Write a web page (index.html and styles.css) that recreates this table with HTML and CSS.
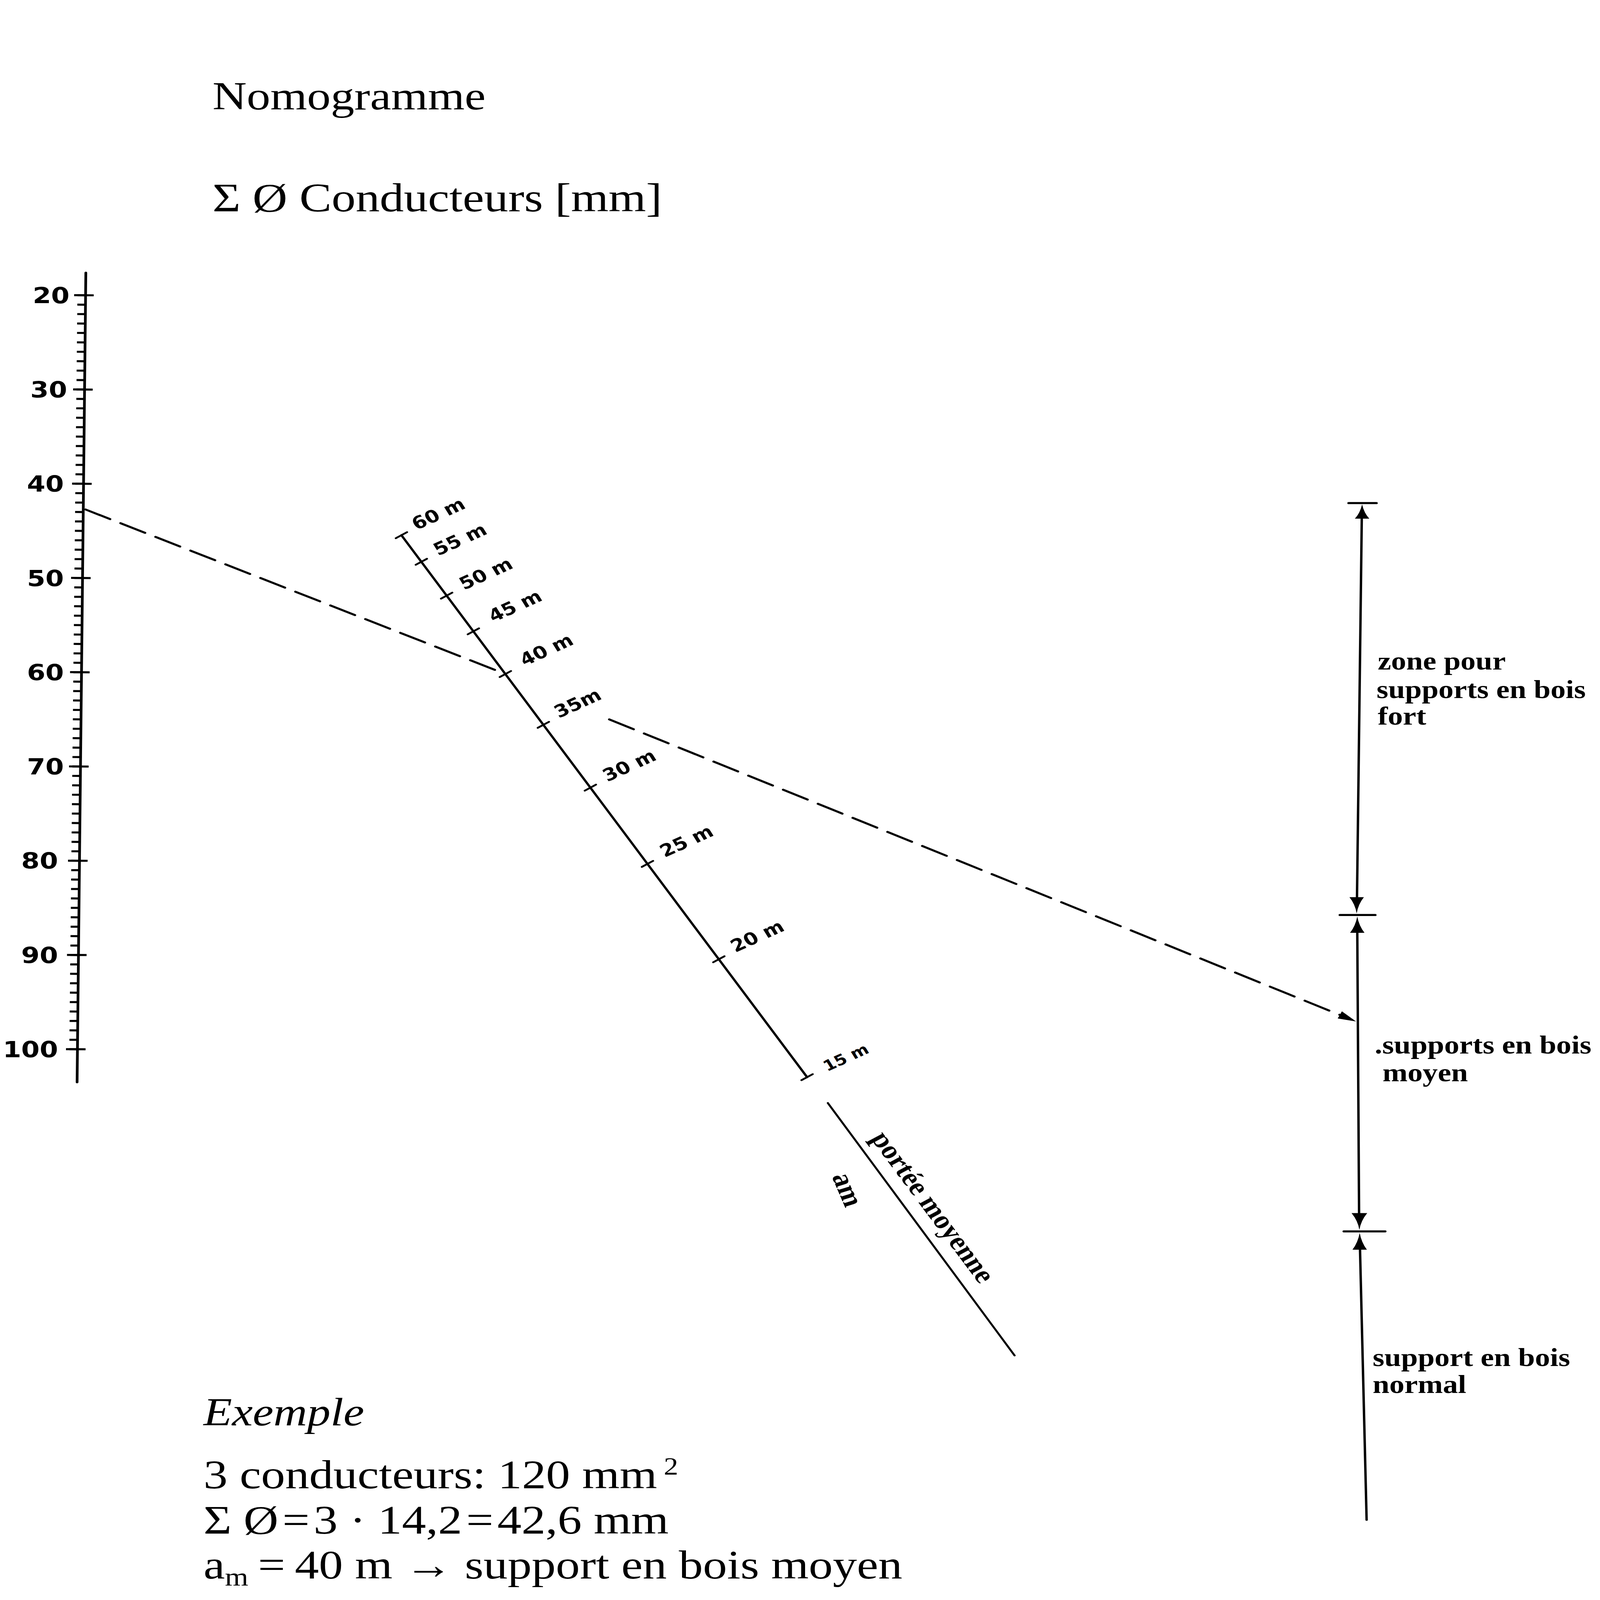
FILE: index.html
```html
<!DOCTYPE html>
<html lang="fr">
<head>
<meta charset="utf-8">
<title>Nomogramme</title>
<link rel="stylesheet" href="styles.css">
</head>
<body>
<main class="page">
  <header class="titles">
    <h1 class="title">Nomogramme</h1>
    <p class="axis-title">Σ Ø Conducteurs [mm]</p>
  </header>

  <svg class="nomogram" viewBox="0 0 5313 6281" preserveAspectRatio="none" xmlns="http://www.w3.org/2000/svg" aria-label="Nomogramme">
    <!-- left scale: Σ Ø conducteurs -->
    <g class="ink">
      <line class="axis" x1="285" y1="1071" x2="256" y2="4248"/>
      <line class="minor-ticks" x1="270.7" y1="1155" x2="243.6" y2="4123"/>
      <line class="major-ticks" x1="278.7" y1="1155" x2="251.6" y2="4123"/>
    </g>
    <g class="scale-label">
      <text x="231" y="1191">20</text>
      <text x="223" y="1561">30</text>
      <text x="212" y="1931">40</text>
      <text x="212" y="2301">50</text>
      <text x="212" y="2671">60</text>
      <text x="212" y="3041">70</text>
      <text x="193" y="3411">80</text>
      <text x="193" y="3781">90</text>
      <text x="193" y="4151">100</text>
    </g>

    <!-- oblique scale: portée moyenne -->
    <g class="ink">
      <line class="span-line" x1="1333" y1="2101" x2="2680" y2="4228.5"/>
      <line class="tick" x1="1314.4" y1="2112.8" x2="1351.6" y2="2089.2"/>
      <line class="tick" x1="1380.5" y1="2217.2" x2="1417.7" y2="2193.6"/>
      <line class="tick" x1="1464.6" y1="2350.0" x2="1501.8" y2="2326.4"/>
      <line class="tick" x1="1553.3" y1="2490.2" x2="1590.5" y2="2466.6"/>
      <line class="tick" x1="1659.5" y1="2657.8" x2="1696.7" y2="2634.2"/>
      <line class="tick" x1="1785.7" y1="2857.2" x2="1822.9" y2="2833.6"/>
      <line class="tick" x1="1941.8" y1="3103.8" x2="1979.0" y2="3080.2"/>
      <line class="tick" x1="2131.4" y1="3403.1" x2="2168.6" y2="3379.5"/>
      <line class="tick" x1="2368.4" y1="3777.5" x2="2405.6" y2="3753.9"/>
      <line class="tick" x1="2661.4" y1="4240.3" x2="2698.6" y2="4216.7"/>
      <line class="span-under" x1="2749" y1="4330" x2="3369" y2="5321"/>
    </g>
    <g class="span-label">
      <text x="1383" y="2082" transform="rotate(-28 1383 2082)">60 m</text>
      <text x="1455" y="2183" transform="rotate(-28 1455 2183)">55 m</text>
      <text x="1541" y="2317" transform="rotate(-28 1541 2317)">50 m</text>
      <text x="1638" y="2444" transform="rotate(-28 1638 2444)">45 m</text>
      <text x="1742" y="2616" transform="rotate(-28 1742 2616)">40 m</text>
      <text x="1856" y="2820" transform="rotate(-28 1856 2820)">35m</text>
      <text x="2017" y="3070" transform="rotate(-28 2017 3070)">30 m</text>
      <text x="2207" y="3367" transform="rotate(-28 2207 3367)">25 m</text>
      <text x="2442" y="3740" transform="rotate(-28 2442 3740)">20 m</text>
      <text class="span-label-small" x="2747" y="4207" transform="rotate(-28 2747 4207)">15 m</text>
    </g>
    <text class="serif-label" x="2890" y="4468" transform="rotate(57.7 2890 4468)">portée moyenne</text>
    <text class="serif-label" x="2762" y="4618" transform="rotate(70 2762 4618)">am</text>

    <!-- example construction lines -->
    <g class="ink">
      <line class="dashed" x1="284" y1="2000" x2="1672" y2="2643"/>
      <line class="dashed" x1="2023" y1="2824" x2="4470" y2="3994"/>
      <polygon class="fill" points="4503,4010 4442,3998 4456,3970"/>
    </g>

    <!-- right scale: supports -->
    <g class="ink">
      <line class="zone-line" x1="4478" y1="1975" x2="4571" y2="1975"/>
      <path class="fill" d="M4523 1980 Q4530 2015 4547 2036 L4499 2036 Q4516 2015 4523 1980 Z"/>
      <line class="zone-line" x1="4522" y1="2030" x2="4506" y2="3530"/>
      <path class="fill" d="M4481 3522 L4529 3522 Q4510 3550 4505 3586 Q4500 3550 4481 3522 Z"/>
      <line class="zone-line" x1="4449" y1="3592" x2="4567" y2="3592"/>
      <path class="fill" d="M4507 3598 Q4513 3635 4531 3662 L4483 3662 Q4501 3635 4507 3598 Z"/>
      <line class="zone-line" x1="4507" y1="3655" x2="4513" y2="4765"/>
      <path class="fill" d="M4488 4762 L4540 4762 Q4519 4792 4514 4828 Q4509 4792 4488 4762 Z"/>
      <line class="zone-line" x1="4462" y1="4834" x2="4600" y2="4834"/>
      <path class="fill" d="M4515 4840 Q4521 4878 4539 4906 L4491 4906 Q4509 4878 4515 4840 Z"/>
      <line class="zone-line" x1="4516" y1="4900" x2="4538" y2="5966"/>
    </g>
    <text class="serif-label">
      <tspan x="4575" y="2629">zone pour</tspan>
      <tspan x="4571" y="2740">supports en bois</tspan>
      <tspan x="4575" y="2844">fort</tspan>
    </text>
    <text class="serif-label">
      <tspan x="4565" y="4136">.supports en bois</tspan>
      <tspan x="4591" y="4244">moyen</tspan>
    </text>
    <text class="serif-label">
      <tspan x="4558" y="5362">support en bois</tspan>
      <tspan x="4558" y="5469">normal</tspan>
    </text>
  </svg>

  <section class="example">
    <p class="example-head">Exemple</p>
    <p class="example-line">3 conducteurs: 120 mm<sup class="power">2</sup></p>
    <p class="example-line">Σ Ø&#8202;=&#8202;3 · 14,2&#8202;=&#8202;42,6 mm</p>
    <p class="example-line">a<sub class="index">m</sub>&#8201;=&#8201;40 m → support en bois moyen</p>
  </section>
</main>
</body>
</html>
```

FILE: styles.css
```css
:root {
  /* one pixel of the 5313 x 6281 drawing, across and down the viewport */
  --u: calc(100vw / 5313);
  --v: calc(100vh / 6281);
  /* how much wider than tall one drawing pixel is on screen */
  --stretch: calc(1.182194 * tan(atan2(100vw, 100vh)));
}

html,
body {
  margin: 0;
  padding: 0;
  background: #ffffff;
  overflow: hidden;
}

.page {
  position: relative;
  width: 100vw;
  height: 100vh;
  display: flex;
  flex-direction: column;
  overflow: hidden;
  color: #000000;
  font-family: "Liberation Serif", "Times New Roman", serif;
}

/* text lines keep the drawing's proportions */
.titles,
.example {
  display: flex;
  flex-direction: column;
  align-items: flex-start;
}

.title,
.axis-title,
.example-head,
.example-line {
  transform-origin: 0 50%;
  transform: scaleX(var(--stretch));
}

.titles {
  padding: calc(277 * var(--v)) 0 0 calc(706 * var(--u));
}

.title {
  margin: 0 0 calc(199 * var(--v));
  font-size: calc(157 * var(--v));
  font-weight: normal;
  line-height: calc(200 * var(--v));
}

.axis-title {
  margin: 0;
  font-size: calc(160 * var(--v));
  line-height: calc(200 * var(--v));
}

.nomogram {
  position: absolute;
  left: 0;
  top: 0;
  width: 100vw;
  height: 100vh;
}

.ink {
  stroke: #000000;
  fill: none;
  stroke-linecap: round;
}

.axis {
  stroke-width: 9;
}

.minor-ticks {
  stroke-width: 27;
  stroke-linecap: butt;
  stroke-dasharray: 8 29;
}

.major-ticks {
  stroke-width: 65;
  stroke-linecap: butt;
  stroke-dasharray: 8 362;
}

.span-line {
  stroke-width: 8;
}

.span-under {
  stroke-width: 7;
}

.tick {
  stroke-width: 7;
}

.dashed {
  stroke-width: 8;
  stroke-dasharray: 90 38;
}

.zone-line {
  stroke-width: 8;
}

.fill {
  fill: #000000;
  stroke: none;
}

.scale-label {
  font-family: "DejaVu Sans", "Verdana", sans-serif;
  font-weight: bold;
  font-size: 88px;
  text-anchor: end;
  fill: #000000;
}

.span-label {
  font-family: "DejaVu Sans", "Verdana", sans-serif;
  font-weight: bold;
  font-size: 68px;
  fill: #000000;
}

.span-label-small {
  font-size: 58px;
}

.serif-label {
  font-family: "Liberation Serif", "Times New Roman", serif;
  font-weight: bold;
  font-size: 100px;
  fill: #000000;
}

.example {
  margin-top: auto;
  padding: 0 0 calc(48 * var(--v)) calc(676 * var(--u));
  font-size: calc(160 * var(--v));
  line-height: calc(177 * var(--v));
}

.example-head {
  margin: 0 0 calc(69 * var(--v));
  font-size: calc(155 * var(--v));
  font-style: italic;
}

.example-line {
  margin: 0;
}

.power {
  font-size: calc(96 * var(--v));
  line-height: 0;
  vertical-align: calc(55 * var(--v));
  padding-left: calc(22 * var(--v));
}

.index {
  font-size: calc(100 * var(--v));
  line-height: 0;
  vertical-align: calc(-28 * var(--v));
}
```
